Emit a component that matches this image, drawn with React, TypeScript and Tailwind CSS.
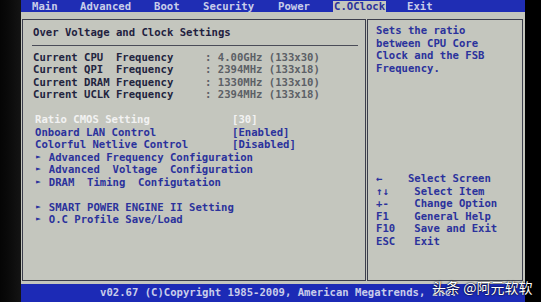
import React from "react";

const Tri = () => (
  <span className="inline-block w-[12.8px] text-[8px] leading-[12.5px] align-top">►</span>
);

export default function App() {
  const freqs = [
    ["Current CPU  Frequency", ": 4.00GHz (133x30)"],
    ["Current QPI  Frequency", ": 2394MHz (133x18)"],
    ["Current DRAM Frequency", ": 1330MHz (133x10)"],
    ["Current UCLK Frequency", ": 2394MHz (133x18)"],
  ];
  const help = [
    ["←", "    Select Screen"],
    ["↑↓", "    Select Item"],
    ["+-", "    Change Option"],
    ["F1", "    General Help"],
    ["F10", "   Save and Exit"],
    ["ESC", "   Exit"],
  ];
  return (
    <div className="w-[541px] h-[302px] bg-black flex overflow-hidden relative font-['DejaVu_Sans_Mono',monospace] font-bold text-[10.6px] leading-[12.5px] whitespace-pre">
      <div className="w-[21px] shrink-0 bg-gradient-to-r from-[#050505] to-[#141414]" />
      <div className="w-[504px] shrink-0 flex flex-col">
        {/* top menu bar */}
        <div className="h-[12px] bg-[#1f2db4] flex items-end pl-[11px] text-[#c9cdea] leading-[11px] overflow-hidden">
          <span className="w-[48px]">Main</span>
          <span className="w-[74px]">Advanced</span>
          <span className="w-[49px]">Boot</span>
          <span className="w-[75px]">Security</span>
          <span className="w-[55px]">Power</span>
          <span className="w-[53px] pl-[1px] bg-[#c4c6be] text-[#2b329c]">C.OClock</span>
          <span className="ml-[21px]">Exit</span>
        </div>
        {/* main grey area */}
        <div className="h-[272px] bg-[#c4c6be] pt-[7px] pb-[3px] pl-[1px] pr-[2px] flex">
          {/* left panel */}
          <div className="w-[344px] h-full border border-[#3c3e4c] flex flex-col">
            <div className="pt-[6px] pl-[10px] text-[#1f2140]">Over Voltage and Clock Settings</div>
            <div className="mt-[6px] ml-[9px] mr-[7px] h-[1px] bg-[#4a4c58]" />
            <div className="mt-[5px] pl-[10px] flex flex-col">
              {freqs.map(([l, v]) => (
                <div key={l} className="flex">
                  <span className="w-[172px] text-[#22243e]">{l}</span>
                  <span className="text-[#5c6066]">{v}</span>
                </div>
              ))}
            </div>
            <div className="mt-[12.5px] pl-[12px] flex flex-col text-[#2b329c]">
              <div className="flex text-[#f2f2f2]">
                <span className="w-[197px]">Ratio CMOS Setting</span>
                <span>[30]</span>
              </div>
              <div className="flex">
                <span className="w-[197px]">Onboard LAN Control</span>
                <span>[Enabled]</span>
              </div>
              <div className="flex">
                <span className="w-[197px]">Colorful Netlive Control</span>
                <span>[Disabled]</span>
              </div>
              <div className="pl-[1px]"><Tri />Advanced Frequency Configuration</div>
              <div className="pl-[1px]"><Tri />Advanced  Voltage  Configuration</div>
              <div className="pl-[1px]"><Tri />DRAM  Timing  Configutation</div>
              <div className="h-[12.5px]" />
              <div className="pl-[1px]"><Tri />SMART POWER ENGINE II Setting</div>
              <div className="pl-[1px]"><Tri />O.C Profile Save/Load</div>
            </div>
          </div>
          {/* right panel */}
          <div className="ml-[1px] w-[156px] h-full border border-[#3c3e4c] flex flex-col pl-[8px] pt-[4px] text-[#2b329c]">
            <div>Sets the ratio</div>
            <div>between CPU Core</div>
            <div>Clock and the FSB</div>
            <div>Frequency.</div>
            <div className="mt-[98px] flex flex-col">
              {help.map(([k, t]) => (
                <div key={k} className="flex">
                  <span>{k}</span>
                  <span>{t}</span>
                </div>
              ))}
            </div>
          </div>
        </div>
        {/* bottom bar */}
        <div className="h-[18px] bg-[#1c2ab6] pl-[79px] pt-[2px] text-[#c9cdea]">
          v02.67 (C)Copyright 1985-2009, American Megatrends, Inc.
        </div>
      </div>
      <div className="flex-1 bg-black" />
      <div className="absolute left-[432px] top-[277px] font-['Noto_Sans_CJK_SC',sans-serif] font-normal text-[14px] leading-[20px] text-white [text-shadow:0_0_2px_rgba(0,0,0,0.9),0_0_1px_rgba(0,0,0,0.9)]">
        头条 @阿元软软
      </div>
    </div>
  );
}
